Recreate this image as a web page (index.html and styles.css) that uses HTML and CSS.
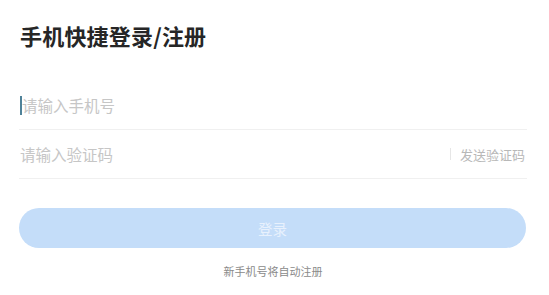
FILE: index.html
```html
<!DOCTYPE html>
<html lang="zh-CN">
<head>
<meta charset="utf-8">
<title>手机快捷登录/注册</title>
<link rel="stylesheet" href="styles.css">
</head>
<body>
<main class="page">
  <h1 class="title">手机快捷登录/注册</h1>
  <div class="field">
    <span class="caret"></span><span class="placeholder">请输入手机号</span>
  </div>
  <div class="field">
    <span class="placeholder grow">请输入验证码</span>
    <span class="divider"></span>
    <span class="send">发送验证码</span>
  </div>
  <button class="submit" type="button">登录</button>
  <p class="note">新手机号将自动注册</p>
</main>
</body>
</html>
```
FILE: styles.css
```css
html, body {
  margin: 0;
  padding: 0;
  background: #ffffff;
}
body {
  font-family: "Noto Sans CJK SC", "Noto Sans", sans-serif;
}
.page {
  width: 508px;
  padding: 20px 0 0 19px;
}
.title {
  margin: 0 0 31px 1px;
  font-size: 22px;
  line-height: 30px;
  font-weight: bold;
  color: #262626;
  letter-spacing: 0.2px;
}
.field {
  display: flex;
  align-items: center;
  height: 48px;
  border-bottom: 1px solid #f0f0f0;
  padding: 0 2px 0 1px;
}
.caret {
  width: 2px;
  height: 19px;
  background: #4f8299;
  margin-right: 0;
}
.placeholder {
  font-size: 15.5px;
  color: #c6c6c6;
}
.grow {
  flex: 1;
}
.divider {
  width: 1px;
  height: 12px;
  background: #e6e6e6;
  margin-right: 9px;
}
.send {
  font-size: 13px;
  color: #b8b8b8;
}
.submit {
  display: block;
  width: 507px;
  height: 40px;
  margin: 29px 0 0 0;
  border: none;
  border-radius: 20px;
  background: #c4ddf9;
  color: #e8f1fd;
  font-family: inherit;
  font-size: 14.5px;
  padding: 0;
}
.note {
  margin: 15px 0 0 0;
  text-align: center;
  font-size: 11px;
  line-height: 16px;
  color: #8a8a8a;
}
```
